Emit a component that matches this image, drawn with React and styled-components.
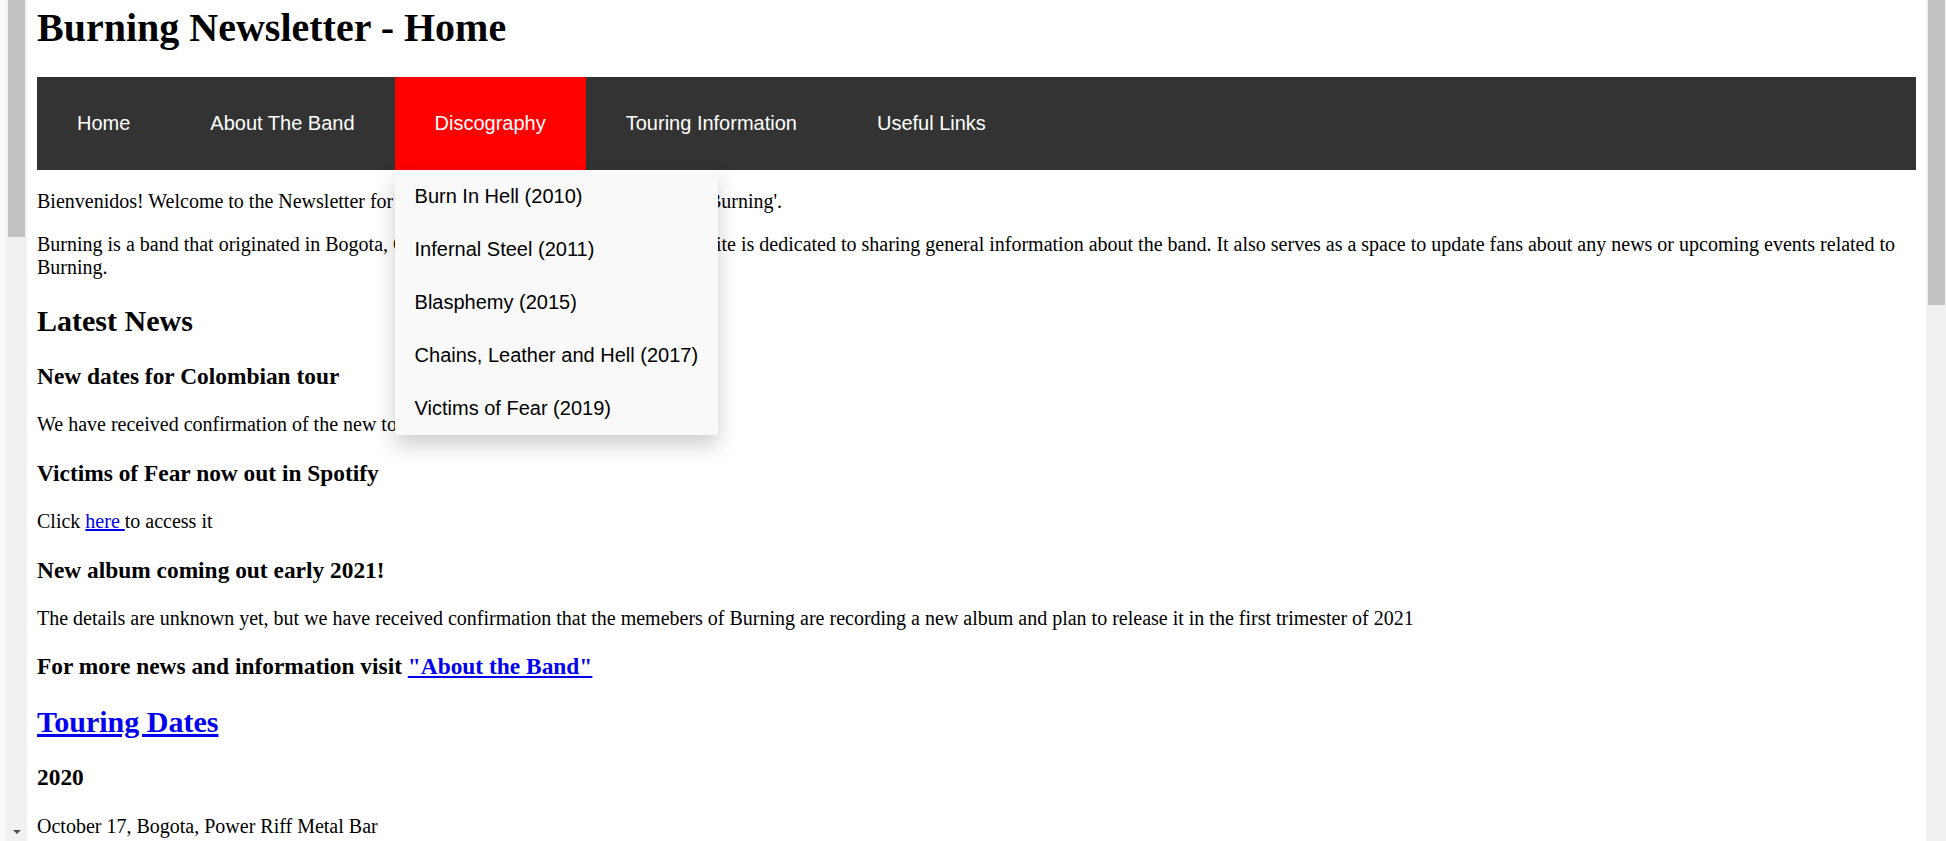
import React from 'react';
import styled, { createGlobalStyle } from 'styled-components';

const GlobalStyle = createGlobalStyle`
  html, body {
    margin: 0;
    padding: 0;
    background: #fff;
    overflow: hidden;
  }
  body {
    font-family: "Liberation Serif", "Times New Roman", serif;
    font-size: 20px;
    color: #000;
  }
`;

const Frame = styled.div`
  display: flex;
  height: 841px;
  overflow: hidden;
`;

const SidePane = styled.div`
  flex: none;
  width: 27px;
  display: flex;
  box-sizing: border-box;
  padding-left: 6px;
  background: #f9f9f9;
`;

const Track = styled.div`
  flex: none;
  width: ${p => p.$width}px;
  box-sizing: border-box;
  display: flex;
  flex-direction: column;
  justify-content: space-between;
  align-items: center;
  padding: 0 ${p => p.$right}px 7px ${p => p.$left}px;
  background: #f1f1f1;
`;

const Thumb = styled.div`
  align-self: stretch;
  height: ${p => p.$height}px;
  background: #c1c1c1;
`;

const DownArrow = styled.div`
  width: 0;
  height: 0;
  border-left: 4px solid transparent;
  border-right: 4px solid transparent;
  border-top: 4px solid #505050;
`;

const Main = styled.main`
  flex: 1;
  min-width: 0;
  padding: 0 10px;
  overflow: hidden;
`;

const Title = styled.h1`
  font-size: 40px;
  margin: 4px 0 26px;
`;

const NavBar = styled.nav`
  display: flex;
  background: #333;
  font-family: "Liberation Sans", Arial, sans-serif;
`;

const NavHolder = styled.div`
  position: relative;
`;

const NavLink = styled.a`
  display: block;
  padding: 35px 40px;
  font-size: 20px;
  color: #fff;
  text-decoration: none;
  background: ${p => (p.$active ? '#ff0000' : 'transparent')};
`;

const Dropdown = styled.div`
  position: absolute;
  top: 100%;
  left: 0;
  z-index: 2;
  background: #f9f9f9;
  box-shadow: 0 10px 20px rgba(0, 0, 0, 0.2);
`;

const DropItem = styled.a`
  display: block;
  padding: 15px 20px;
  font-size: 20px;
  color: #000;
  white-space: nowrap;
  text-decoration: none;
`;

const Para = styled.p`
  margin: 20px 0;
`;

const SectionTitle = styled.h2`
  font-size: 30px;
  margin: 25px 0;
`;

const Headline = styled.h3`
  font-size: 23.4px;
  margin: 23.4px 0;
`;

const Link = styled.a`
  color: #0000ee;
  text-decoration: underline;
`;

const navItems = ['Home', 'About The Band', 'Discography', 'Touring Information', 'Useful Links'];

const albums = [
  'Burn In Hell (2010)',
  'Infernal Steel (2011)',
  'Blasphemy (2015)',
  'Chains, Leather and Hell (2017)',
  'Victims of Fear (2019)',
];

const App = () => {
  return (
    <Frame>
      <GlobalStyle />
      <SidePane>
        <Track $width={21} $left={2} $right={2}>
          <Thumb $height={237} />
          <DownArrow />
        </Track>
      </SidePane>

      <Main>
        <Title>Burning Newsletter - Home</Title>
        <NavBar>
          {navItems.map(item => (
            <NavHolder key={item}>
              <NavLink href="#" $active={item === 'Discography'}>{item}</NavLink>
              {item === 'Discography' && (
                <Dropdown>
                  {albums.map(a => (
                    <DropItem key={a} href="#">{a}</DropItem>
                  ))}
                </Dropdown>
              )}
            </NavHolder>
          ))}
        </NavBar>

        <Para>Bienvenidos! Welcome to the Newsletter for the fans of the Colombian metal band 'Burning'.</Para>
        <Para>
          Burning is a band that originated in Bogota, Colombia, in the early 2000s. This website is dedicated to
          sharing general information about the band. It also serves as a space to update fans about any news or
          upcoming events related to Burning.
        </Para>

        <SectionTitle>Latest News</SectionTitle>
        <Headline>New dates for Colombian tour</Headline>
        <Para>We have received confirmation of the new tour dates.</Para>
        <Headline>Victims of Fear now out in Spotify</Headline>
        <Para>Click <Link href="#">here </Link>to access it</Para>
        <Headline>New album coming out early 2021!</Headline>
        <Para>
          The details are unknown yet, but we have received confirmation that the memebers of Burning are recording a
          new album and plan to release it in the first trimester of 2021
        </Para>
        <Headline>For more news and information visit <Link href="#">"About the Band"</Link></Headline>

        <SectionTitle><Link href="#">Touring Dates</Link></SectionTitle>
        <Headline>2020</Headline>
        <Para>October 17, Bogota, Power Riff Metal Bar</Para>
      </Main>

      <Track $width={20} $left={2} $right={1}>
        <Thumb $height={305} />
        <span />
      </Track>
    </Frame>
  );
};

export default App;
